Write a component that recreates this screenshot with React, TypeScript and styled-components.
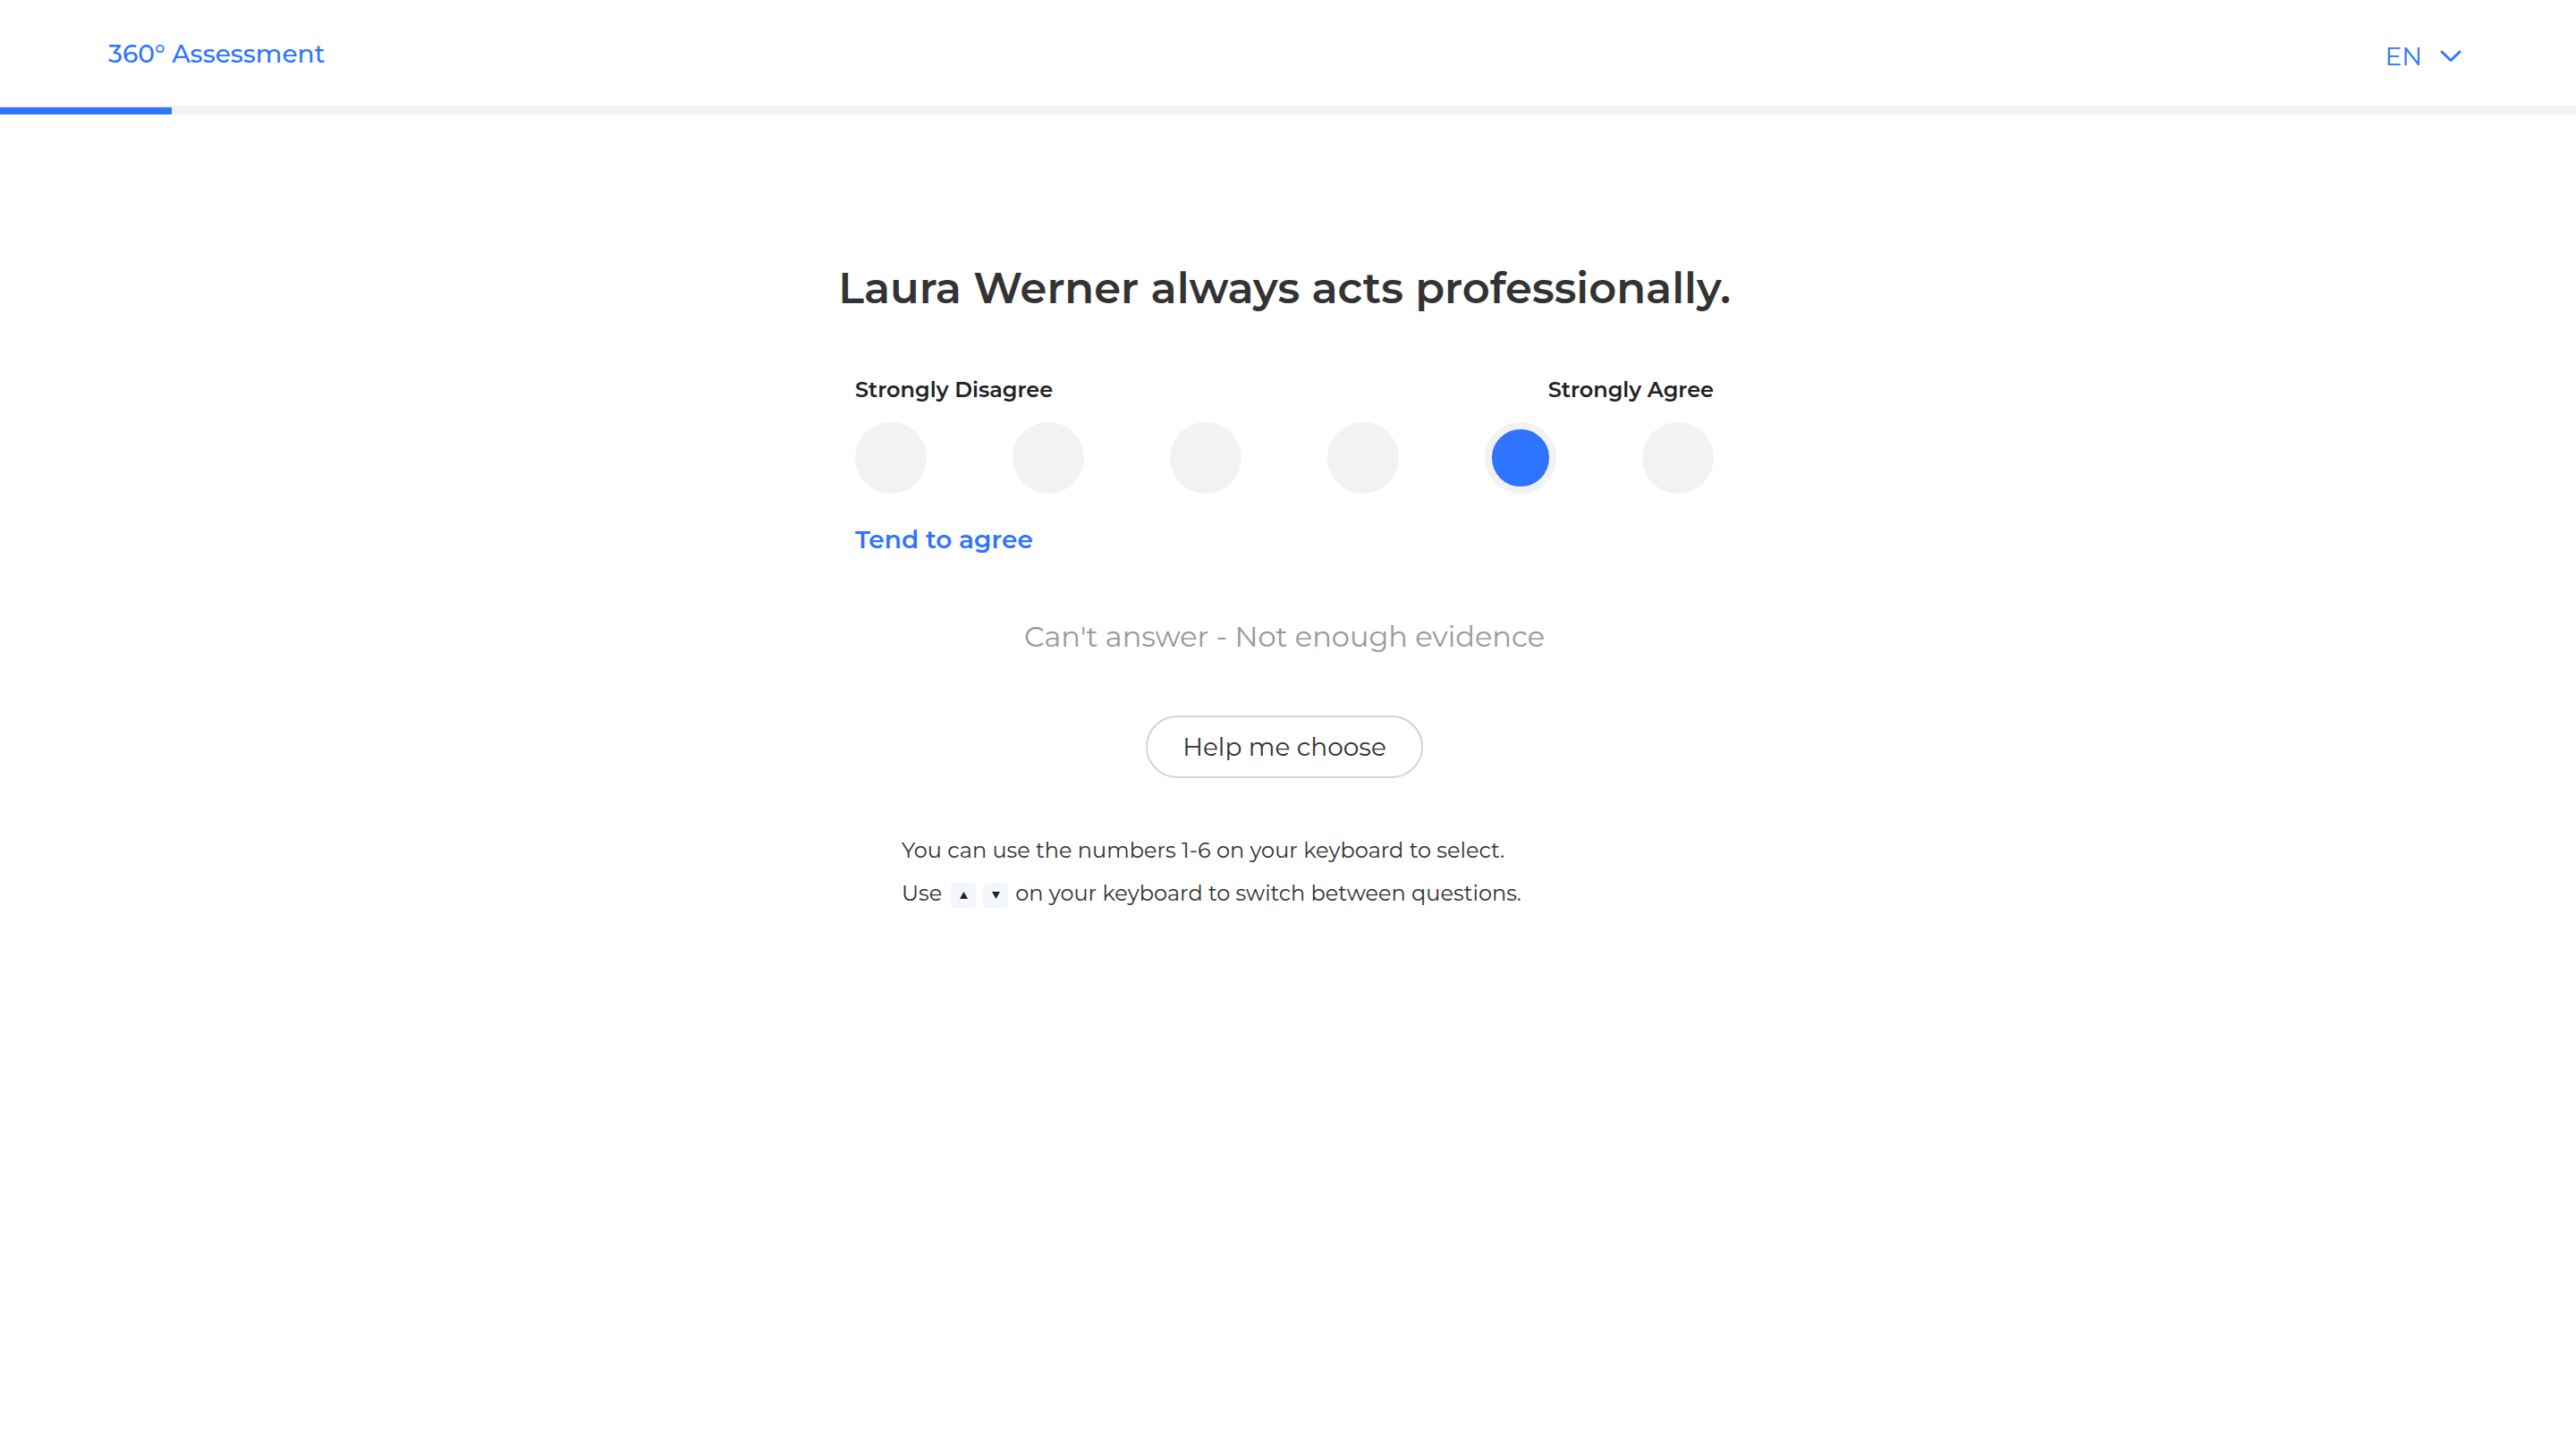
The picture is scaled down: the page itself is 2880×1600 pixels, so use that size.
import React from 'react';
import styled, { createGlobalStyle } from 'styled-components';

const GlobalStyle = createGlobalStyle`
  body {
    margin: 0;
    background: #fff;
    font-family: "Montserrat", "Open Sans", "Liberation Sans", sans-serif;
  }
`;

const options = [1, 2, 3, 4, 5, 6];
const selected = 5;

const Triangle: React.FC<{ down?: boolean }> = ({ down }) => (
  <svg width="9" height="8" viewBox="0 0 9 8">
    <polygon points={down ? '0,0 9,0 4.5,8' : '4.5,0 9,8 0,8'} fill="#222" />
  </svg>
);

const App: React.FC = () => {
  return (
    <>
      <GlobalStyle />
      <Header>
        <Brand>360° Assessment</Brand>
        <Language>
          EN
          <svg width="24" height="14" viewBox="0 0 24 14" fill="none">
            <polyline points="2,2 12,11.5 22,2" stroke="#2f74ff" strokeWidth="3" strokeLinecap="round" strokeLinejoin="round" />
          </svg>
        </Language>
      </Header>
      <Progress>
        <ProgressFill style={{ width: 192 }} />
      </Progress>

      <Main>
        <Question>Laura Werner always acts professionally.</Question>
        <Scale>
          <ScaleLabels>
            <ScaleLabel>Strongly Disagree</ScaleLabel>
            <ScaleLabel>Strongly Agree</ScaleLabel>
          </ScaleLabels>
          <Options>
            {options.map((n) => (
              <Option key={n} active={n === selected} />
            ))}
          </Options>
          <Answer>Tend to agree</Answer>
        </Scale>
        <CantAnswer>Can't answer - Not enough evidence</CantAnswer>
        <HelpButton>Help me choose</HelpButton>
        <Hints>
          <Hint>You can use the numbers 1-6 on your keyboard to select.</Hint>
          <Hint>
            Use
            <Key>
              <Triangle />
            </Key>
            <Key last>
              <Triangle down />
            </Key>
            on your keyboard to switch between questions.
          </Hint>
        </Hints>
      </Main>
    </>
  );
};

const Header = styled.header`
  display: flex;
  align-items: center;
  justify-content: space-between;
  height: 118px;
  padding: 0 128px 0 121px;
  box-sizing: border-box;
`;

const Brand = styled.div`
  margin-top: 2px;
  color: #2f74ff;
  font-size: 28px;
  font-weight: 500;
`;

const Language = styled.div`
  display: flex;
  align-items: center;
  gap: 20px;
  margin-top: 8px;
  color: #2f74ff;
  font-size: 28px;
  font-weight: 400;
`;

const Progress = styled.div`
  display: flex;
  align-items: flex-end;
  height: 10px;
  background: #f2f2f2;
`;

const ProgressFill = styled.div`
  height: 8px;
  background: #2f74ff;
`;

const Main = styled.main`
  display: flex;
  flex-direction: column;
  align-items: center;
  padding: 164px 8px 0 0;
`;

const Question = styled.h1`
  margin: 0;
  color: #333;
  font-size: 48px;
  line-height: 60px;
  font-weight: 600;
`;

const Scale = styled.div`
  width: 960px;
  margin-top: 70px;
`;

const ScaleLabels = styled.div`
  display: flex;
  justify-content: space-between;
`;

const ScaleLabel = styled.span`
  color: #222;
  font-size: 24px;
  line-height: 28px;
  font-weight: 600;
`;

const Options = styled.div`
  display: flex;
  justify-content: space-between;
  margin-top: 22px;
`;

const Option = styled.div<{ active?: boolean }>`
  width: 80px;
  height: 80px;
  border-radius: 50%;
  box-sizing: border-box;
  background: ${(p) => (p.active ? '#2f74ff' : '#f2f2f2')};
  border: ${(p) => (p.active ? '8px solid #f2f2f2' : 'none')};
`;

const Answer = styled.div`
  margin-top: 34px;
  color: #2f74ff;
  font-size: 28px;
  line-height: 34px;
  font-weight: 600;
`;

const CantAnswer = styled.div`
  margin-top: 72px;
  color: #999;
  font-size: 32px;
  line-height: 40px;
  font-weight: 400;
`;

const HelpButton = styled.button`
  margin-top: 68px;
  height: 70px;
  padding: 0 39px;
  border: 2px solid #d4d4d4;
  border-radius: 35px;
  background: #fff;
  color: #333;
  font-family: inherit;
  font-size: 28px;
  font-weight: 400;
`;

const Hints = styled.div`
  width: 856px;
  margin-top: 57px;
`;

const Hint = styled.p`
  margin: 0;
  color: #333;
  font-size: 24px;
  line-height: 48px;
`;

const Key = styled.span<{ last?: boolean }>`
  display: inline-flex;
  align-items: center;
  justify-content: center;
  width: 28px;
  height: 28px;
  margin: 0 ${(p) => (p.last ? '8px' : '0')} 0 ${(p) => (p.last ? '8px' : '10px')};
  border-radius: 4px;
  background: #f3f6fc;
  vertical-align: middle;
`;

export default App;
